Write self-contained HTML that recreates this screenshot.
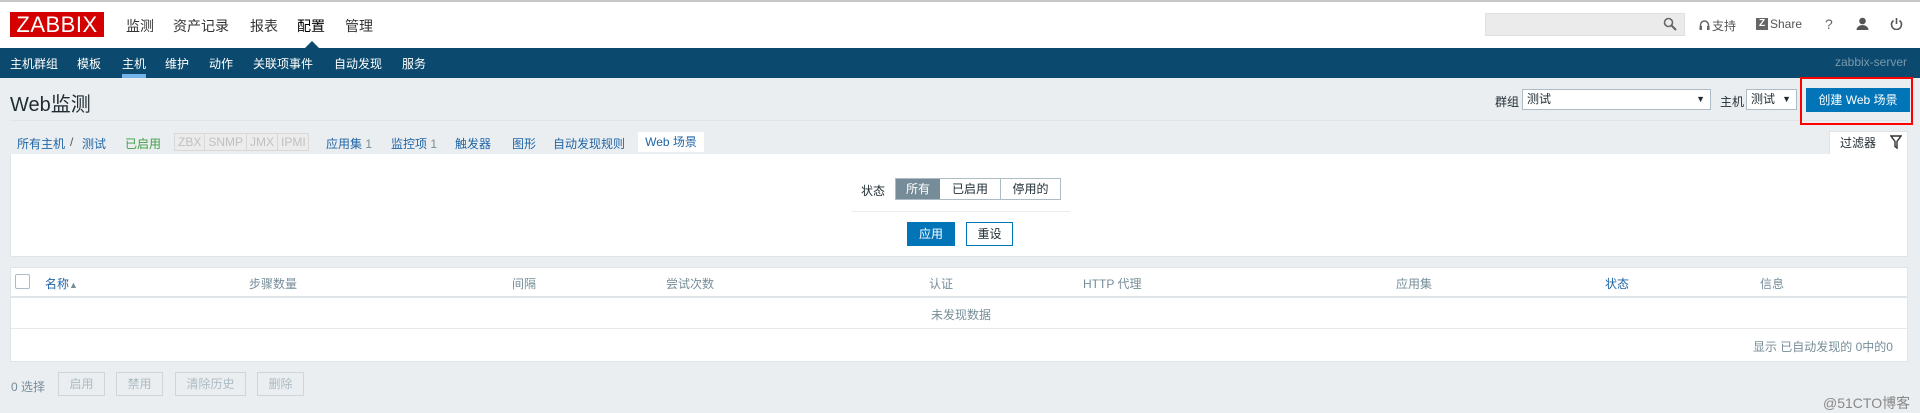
<!DOCTYPE html>
<html><head><meta charset="utf-8"><style>
*{margin:0;padding:0;box-sizing:border-box}
body{width:1920px;height:411px;background:#ebeef0;font-family:"Liberation Sans","Noto Sans CJK SC",sans-serif;font-size:12px;color:#1f2c33;position:relative;overflow:hidden}
.a{position:absolute;white-space:nowrap}
.lnk{color:#1f65a6}
.gr{color:#768d99}
</style></head><body>
<div class="a" style="left:0;top:0;width:1920px;height:2px;background:#c8c8c8"></div>
<div class="a" style="left:0;top:2px;width:1920px;height:46px;background:#fff"></div>
<div class="a" style="left:10px;top:12px;width:94px;height:25px;background:#d40000;color:#fff;font-size:22px;line-height:25px;text-align:center;letter-spacing:0.5px">ZABBIX</div>
<div class="a" style="left:126px;top:16px;font-size:14px;color:#333">监测</div>
<div class="a" style="left:173px;top:16px;font-size:14px;color:#333">资产记录</div>
<div class="a" style="left:250px;top:16px;font-size:14px;color:#333">报表</div>
<div class="a" style="left:297px;top:16px;font-size:14px;color:#000">配置</div>
<div class="a" style="left:345px;top:16px;font-size:14px;color:#333">管理</div>
<div class="a" style="left:305px;top:41px;width:0;height:0;border-left:7px solid transparent;border-right:7px solid transparent;border-bottom:7px solid #0b4a6e"></div>
<div class="a" style="left:1485px;top:13px;width:200px;height:23px;background:#ebebeb;border:1px solid #e0e0e0"></div>
<svg class="a" style="left:1663px;top:17px" width="14" height="14" viewBox="0 0 14 14"><circle cx="5.5" cy="5.5" r="4" fill="none" stroke="#666" stroke-width="1.6"/><path d="M8.5 8.5L13 13" stroke="#666" stroke-width="2"/></svg>
<svg class="a" style="left:1699px;top:19px" width="11" height="12" viewBox="0 0 11 12"><path d="M1.5 9V6a4 4 0 0 1 8 0v3" fill="none" stroke="#666" stroke-width="1.5"/><rect x="0.5" y="7" width="2.5" height="4" fill="#666"/><rect x="8" y="7" width="2.5" height="4" fill="#666"/></svg>
<div class="a" style="left:1712px;top:17px;font-size:12px;color:#555">支持</div>
<div class="a" style="left:1756px;top:18px;width:12px;height:12px;background:#666;color:#fff;font-size:10px;font-weight:bold;line-height:12px;text-align:center">Z</div>
<div class="a" style="left:1770px;top:17px;font-size:12px;color:#555">Share</div>
<div class="a" style="left:1825px;top:16px;font-size:14px;color:#666">?</div>
<svg class="a" style="left:1856px;top:17px" width="13" height="13" viewBox="0 0 13 13"><circle cx="6.5" cy="4" r="3.3" fill="#555"/><path d="M0.5 13a6 5 0 0 1 12 0z" fill="#555"/></svg>
<svg class="a" style="left:1890px;top:17px" width="13" height="13" viewBox="0 0 13 13"><path d="M3.5 3.5a5 5 0 1 0 6 0" fill="none" stroke="#555" stroke-width="1.6"/><path d="M6.5 1v6" stroke="#555" stroke-width="1.6"/></svg>

<div class="a" style="left:0;top:48px;width:1920px;height:30px;background:#0b4a6e"></div>
<div class="a" style="left:10px;top:55px;color:#fff;font-size:12px">主机群组</div>
<div class="a" style="left:77px;top:55px;color:#fff">模板</div>
<div class="a" style="left:122px;top:55px;color:#fff">主机</div>
<div class="a" style="left:122px;top:74px;width:24px;height:4px;background:#73b3ea"></div>
<div class="a" style="left:165px;top:55px;color:#fff">维护</div>
<div class="a" style="left:209px;top:55px;color:#fff">动作</div>
<div class="a" style="left:253px;top:55px;color:#fff">关联项事件</div>
<div class="a" style="left:334px;top:55px;color:#fff">自动发现</div>
<div class="a" style="left:402px;top:55px;color:#fff">服务</div>
<div class="a" style="right:13px;top:55px;color:#7a98ad">zabbix-server</div>

<div class="a" style="left:10px;top:88px;font-size:20px;color:#1f2c33">Web监测</div>
<div class="a" style="left:10px;top:120px;width:1898px;height:1px;background:#dfe4e7"></div>
<div class="a" style="left:1495px;top:93px">群组</div>
<div class="a" style="left:1522px;top:89px;width:189px;height:21px;background:#fff;border:1px solid #acbbc4;padding-left:4px;line-height:19px">测试<span style="position:absolute;right:5px;font-size:9px">▼</span></div>
<div class="a" style="left:1720px;top:93px">主机</div>
<div class="a" style="left:1746px;top:89px;width:51px;height:21px;background:#fff;border:1px solid #acbbc4;padding-left:4px;line-height:19px">测试<span style="position:absolute;right:5px;font-size:9px">▼</span></div>
<div class="a" style="left:1806px;top:88px;width:104px;height:24px;background:#0275b8;color:#fff;text-align:center;line-height:24px">创建 Web 场景</div>
<div class="a" style="left:1800px;top:77px;width:113px;height:48px;border:2px solid #f00"></div>

<div class="a lnk" style="left:17px;top:135px">所有主机</div>
<div class="a" style="left:70px;top:135px;color:#555">/</div>
<div class="a lnk" style="left:82px;top:135px">测试</div>
<div class="a" style="left:125px;top:135px;color:#429e47">已启用</div>
<div class="a" style="left:174px;top:133px;width:135px;height:18px;border:1px solid #d8d8d8;background:#ececec;color:#c0c0c0;line-height:16px;font-size:12px;display:flex">
<span style="padding:0 3px;border-right:1px solid #d8d8d8">ZBX</span><span style="padding:0 3px;border-right:1px solid #d8d8d8">SNMP</span><span style="padding:0 3px;border-right:1px solid #d8d8d8">JMX</span><span style="padding:0 3px">IPMI</span></div>
<div class="a lnk" style="left:326px;top:135px">应用集 <span class="gr">1</span></div>
<div class="a lnk" style="left:391px;top:135px">监控项 <span class="gr">1</span></div>
<div class="a lnk" style="left:455px;top:135px">触发器</div>
<div class="a lnk" style="left:512px;top:135px">图形</div>
<div class="a lnk" style="left:553px;top:135px">自动发现规则</div>
<div class="a lnk" style="left:638px;top:132px;width:66px;height:20px;background:#fff;text-align:center;line-height:20px">Web 场景</div>

<div class="a" style="left:1829px;top:131px;width:79px;height:24px;background:#fff;border:1px solid #dfe4e7;border-bottom:none;padding-left:10px;line-height:22px">过滤器</div>
<svg class="a" style="left:1890px;top:135px" width="12" height="14" viewBox="0 0 12 14"><path d="M1 1h10L7 6.5V13L5 11.5V6.5z" fill="none" stroke="#333" stroke-width="1.4"/></svg>
<div class="a" style="left:10px;top:154px;width:1898px;height:103px;background:#fff;border:1px solid #dfe4e7;border-top:none"></div>
<div class="a" style="left:861px;top:182px">状态</div>
<div class="a" style="left:895px;top:178px;width:166px;height:22px;border:1px solid #acbbc4;display:flex;background:#fff;line-height:20px">
<span style="width:44px;text-align:center;background:#768d99;color:#fff">所有</span><span style="width:61px;text-align:center;border-right:1px solid #acbbc4">已启用</span><span style="width:59px;text-align:center">停用的</span></div>
<div class="a" style="left:851px;top:211px;width:219px;height:1px;background:#ebeef0"></div>
<div class="a" style="left:907px;top:222px;width:48px;height:24px;background:#0275b8;color:#fff;text-align:center;line-height:24px">应用</div>
<div class="a" style="left:966px;top:222px;width:47px;height:24px;background:#fff;border:1px solid #0275b8;color:#1f2c33;text-align:center;line-height:22px">重设</div>

<div class="a" style="left:10px;top:267px;width:1898px;height:95px;background:#fff;border:1px solid #dfe4e7"></div>
<div class="a" style="left:10px;top:296px;width:1898px;height:2px;background:#dfe4e7"></div>
<div class="a" style="left:10px;top:328px;width:1898px;height:1px;background:#e6e9eb"></div>
<div class="a" style="left:15px;top:274px;width:15px;height:15px;border:1px solid #acbbc4;border-radius:2px;background:#fff"></div>
<div class="a lnk" style="left:45px;top:275px">名称<span style="font-size:9px;color:#768d99">▲</span></div>
<div class="a gr" style="left:249px;top:275px">步骤数量</div>
<div class="a gr" style="left:512px;top:275px">间隔</div>
<div class="a gr" style="left:666px;top:275px">尝试次数</div>
<div class="a gr" style="left:929px;top:275px">认证</div>
<div class="a gr" style="left:1083px;top:275px">HTTP 代理</div>
<div class="a gr" style="left:1396px;top:275px">应用集</div>
<div class="a lnk" style="left:1605px;top:275px">状态</div>
<div class="a gr" style="left:1760px;top:275px">信息</div>
<div class="a gr" style="left:931px;top:306px">未发现数据</div>
<div class="a gr" style="right:27px;top:338px">显示 已自动发现的 0中的0</div>

<div class="a gr" style="left:11px;top:378px">0 选择</div>
<div class="a" style="left:58px;top:372px;width:47px;height:24px;border:1px solid #cfd6db;background:#ebeef0;color:#acbbc4;text-align:center;line-height:22px">启用</div>
<div class="a" style="left:116px;top:372px;width:47px;height:24px;border:1px solid #cfd6db;background:#ebeef0;color:#acbbc4;text-align:center;line-height:22px">禁用</div>
<div class="a" style="left:175px;top:372px;width:71px;height:24px;border:1px solid #cfd6db;background:#ebeef0;color:#acbbc4;text-align:center;line-height:22px">清除历史</div>
<div class="a" style="left:257px;top:372px;width:47px;height:24px;border:1px solid #cfd6db;background:#ebeef0;color:#acbbc4;text-align:center;line-height:22px">删除</div>
<div class="a" style="left:1823px;top:393px;font-size:14px;color:#888">@51CTO博客</div>
</body></html>
